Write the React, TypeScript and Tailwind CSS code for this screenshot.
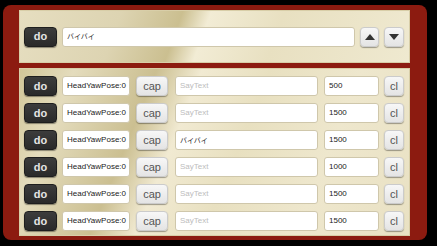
const font = "font-['Liberation_Sans','Noto_Sans_CJK_JP',sans-serif]";

const DoButton = () => (
  <button className="w-[33px] h-[20px] shrink-0 rounded-[4px] bg-gradient-to-b from-[#3c3c3c] to-[#2a2a2a] border border-[#1e1e1e] shadow-[0_1px_1px_rgba(0,0,0,0.4)] text-[#e4e4e4] text-[11px] font-bold leading-none flex items-center justify-center">
    do
  </button>
);

const LightButton = ({ w, children }: { w: string; children: React.ReactNode }) => (
  <button
    className={`${w} h-[20px] shrink-0 rounded-[4px] bg-gradient-to-b from-[#f7f7f7] to-[#e4e4e4] border border-[#cbcbcb] shadow-[0_1px_1px_rgba(0,0,0,0.35)] text-[#555] text-[11px] leading-none flex items-center justify-center`}
  >
    {children}
  </button>
);

const Field = ({ w, value, placeholder }: { w: string; value?: string; placeholder?: string }) => {
  const jp = value && /[\u3000-\u30ff]/.test(value);
  return (
    <div
      className={`${w} h-[20px] shrink-0 rounded-[3px] bg-white border border-[#cfc7ab] pl-[4px] flex items-center leading-none overflow-hidden whitespace-nowrap ${
        jp ? "text-[7px]" : "text-[8px]"
      } ${value ? "text-[#222]" : "text-[#bdbdbd]"}`}
    >
      {value || placeholder}
    </div>
  );
};

const rows = [
  { say: "", ms: "500" },
  { say: "", ms: "1500" },
  { say: "バイバイ", ms: "1500" },
  { say: "", ms: "1000" },
  { say: "", ms: "1500" },
  { say: "", ms: "1500" },
];

export default function App() {
  return (
    <div className={`w-[437px] h-[246px] bg-black pt-[5px] pl-[3px] ${font}`}>
      <div className="w-[424px] h-[235px] rounded-[8px] bg-[#8c1b10] pt-[5px] pl-[16px] flex flex-col gap-[5px]">
        <div className="w-[391px] h-[53px] bg-[linear-gradient(110deg,#e6dec0_0%,#ddd4b2_25%,#cbbf90_40%,#f2ecd5_47%,#e8e0c1_65%,#efe9d0_100%)] border border-[#d8cea8] pl-[4px] flex items-center">
          <DoButton />
          <div className="ml-[5px]">
            <Field w="w-[293px]" value="バイバイ" />
          </div>
          <div className="ml-[5px]">
            <LightButton w="w-[19px]">
              <svg width="10" height="6" viewBox="0 0 10 6">
                <path d="M5 0 L10 6 L0 6 Z" fill="#333" />
              </svg>
            </LightButton>
          </div>
          <div className="ml-[5px]">
            <LightButton w="w-[20px]">
              <svg width="10" height="6" viewBox="0 0 10 6">
                <path d="M0 0 L10 0 L5 6 Z" fill="#333" />
              </svg>
            </LightButton>
          </div>
        </div>
        <div className="w-[391px] h-[168px] bg-[linear-gradient(112deg,#d2c698_0%,#e4dcbd_12%,#cbbf91_30%,#f1ead2_40%,#e8e0c0_55%,#eee7cd_75%,#e9e1c3_100%)] border border-[#d8cea8] pl-[4px] pt-[7px] flex flex-col gap-[7px]">
          {rows.map((r, i) => (
            <div key={i} className="flex items-center">
              <DoButton />
              <div className="ml-[5px]">
                <Field w="w-[68px]" value="HeadYawPose:0" />
              </div>
              <div className="ml-[6px]">
                <LightButton w="w-[32px]">cap</LightButton>
              </div>
              <div className="ml-[7px]">
                <Field w="w-[143px]" value={r.say} placeholder="SayText" />
              </div>
              <div className="ml-[6px]">
                <Field w="w-[55px]" value={r.ms} />
              </div>
              <div className="ml-[5px]">
                <LightButton w="w-[20px]">cl</LightButton>
              </div>
            </div>
          ))}
        </div>
      </div>
    </div>
  );
}
